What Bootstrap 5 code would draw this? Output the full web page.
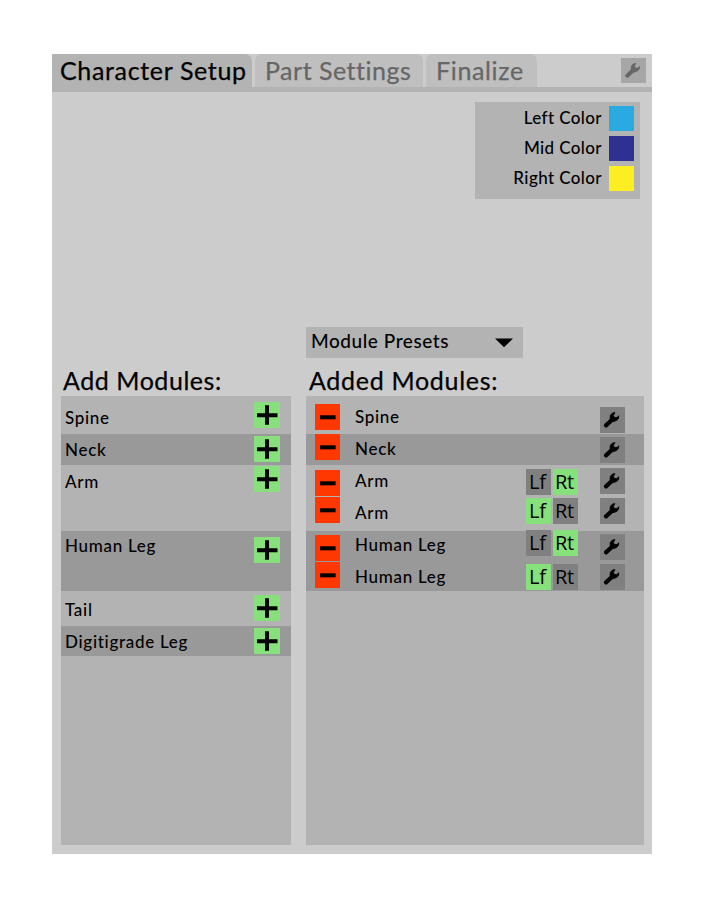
<!DOCTYPE html>
<html lang="en">
<head>
<meta charset="utf-8">
<meta name="viewport" content="width=device-width, initial-scale=1">
<title>Character Setup</title>
<link href="https://cdn.jsdelivr.net/npm/bootstrap@5.3.0/dist/css/bootstrap.min.css" rel="stylesheet">
<style>
body { background: #fff; font-family: Lato, "Liberation Sans", sans-serif; font-weight: 500; color: #000; font-size: 17px; line-height: 26px; overflow: hidden; }
.panel { width: 600px; height: 800px; margin: 54px 0 0 52px; background: #ccc; }
.tabs { height: 38px; border-bottom: 5px solid #b3b3b3; column-gap: 3px; --bs-nav-link-color: #666; }
.tabs .nav-link { height: 33px; padding: 0 0 1px; border: 0; border-radius: 7px 7px 0 0; background: #bfbfbf; color: #666; font-size: 25px; line-height: 32px; font-weight: 400; text-align: left; white-space: nowrap; letter-spacing: .5px; -webkit-text-stroke: .25px; }
.tabs .tab-character { width: 200px; padding-left: 8px; color: #000; background: #b3b3b3; border-radius: 0 7px 0 0; letter-spacing: .65px; }
.tabs .tab-part { width: 168px; padding-left: 10px; }
.tabs .tab-final { width: 111px; padding-left: 10px; letter-spacing: .65px; }
.tool { width: 25px; height: 26px; padding: 0; border: 0; border-radius: 0; background: #808080; color: #000; display: block; flex: none; }
.tool svg { display: block; width: 25px; height: 26px; }
.tool-global { height: 25px; margin: 4px 6px 0 auto; background: #a6a6a6; color: #666; }
.tool-global svg { height: 25px; }
.colors { width: 165px; height: 97px; margin: 10px 12px 1px auto; padding: 4px 6px 0 0; background: #b3b3b3; row-gap: 5px; letter-spacing: .4px; }
.colors .swatch { width: 25px; height: 25px; margin-left: 7px; }
.colors .line { height: 25px; line-height: 24px; }
.sw-left { background: #29abe2; } .sw-mid { background: #2e3192; } .sw-right { background: #fcee21; }
.presets { width: 217px; height: 31px; margin: 127px 0 0 254px; padding: 0 10px 0 5px; border: 0; border-radius: 0; background: #b3b3b3; font-size: 19px; line-height: 28px; font-weight: 500; color: #000; letter-spacing: .55px; }
.presets:hover { background: #b3b3b3; color: #000; }
.lists { margin: 11px 8px 0 9px; column-gap: 15px; }
.col-add { width: 230px; } .col-added { width: 338px; }
.title { height: 27px; margin: 0; padding-left: 2px; font-size: 25px; line-height: 22px; font-weight: 400; white-space: nowrap; letter-spacing: .55px; -webkit-text-stroke: .25px; }
.col-added .title { padding-left: 3px; letter-spacing: .7px; }
.modules { height: 449px; background: #b3b3b3; letter-spacing: .7px; }
.modules li { background: #b3b3b3; }
.modules .alt { background: #999; }
.name { margin-top: var(--t); line-height: 29px; white-space: nowrap; }
.add, .remove { width: 26px; height: 26px; padding: 0; border: 0; border-radius: 0; margin-top: var(--b); display: block; flex: none; }
.add { background: #87e07b; margin-right: 11px; }
.remove { width: 25px; background: #ff3700; margin: var(--b) 15px 0 9px; overflow: hidden; }
.add svg, .remove svg { display: block; }
.sides { column-gap: 2px; margin: var(--s) 22px 0 auto; }
.sides span { width: 25px; height: 26px; padding-right: 2px; background: #808080; font: 400 20px/26px "Open Sans", "Noto Sans", sans-serif; font-stretch: 92%; letter-spacing: -.2px; text-align: center; }
.sides .on { background: #87e07b; }
.modules .tool { margin: var(--w) 19px 0 0; }
.modules .tool.solo { margin-left: auto; }
.col-add .name { padding-left: 4px; }
.a1 { height: 38px; --t: 7px; --b: 6px; } .a2 { height: 31px; --t: 1px; --b: 2px; } .a3 { height: 66px; --t: 2px; --b: 1px; }
.a4 { height: 60px; --t: 0px; --b: 6px; } .a5 { height: 35px; --t: 4px; --b: 4px; } .a6 { height: 30px; --t: 1px; --b: 2px; }
.m1 { height: 38px; --t: 6px; --b: 8px; --w: 11px; } .m2 { height: 31px; --t: 0px; --b: 0px; --w: 3px; }
.m3 { height: 33px; --t: 1px; --b: 5px; --s: 4px; --w: 3px; } .m4 { height: 33px; --t: 0px; --b: -1px; --s: 0px; --w: 0px; }
.m5 { height: 30px; --t: -1px; --b: 4px; --s: -1px; --w: 3px; } .m6 { height: 30px; --t: 1px; --b: 1px; --s: 3px; --w: 3px; }
</style>
<script src="https://cdn.jsdelivr.net/npm/bootstrap@5.3.0/dist/js/bootstrap.bundle.min.js"></script>
</head>
<body>
<svg class="d-none" xmlns="http://www.w3.org/2000/svg">
  <symbol id="wrench" viewBox="0.9 -0.3 25 26"><path d="M6.9 18.1 13 12.4" stroke="currentColor" stroke-width="4.2" stroke-linecap="round" fill="none"/><path d="M11 10.8 11.3 8 13.2 5.9 15.8 5.3 14.2 8.2 15.5 10.4 18.2 10.1 19.6 8.4 19.4 11 17.6 13.2 14.5 14.2 12 14z" fill="currentColor" stroke="currentColor" stroke-width=".9" stroke-linejoin="round"/></symbol>
  <symbol id="plus" viewBox="0 0 26 26"><path d="M3 11.2h20.5v4H3zM11 3.2h4v19.5h-4z"/></symbol>
  <symbol id="minus" viewBox="0 0 26 26"><path d="M5 11.3h15.6v4H5z"/></symbol>
</svg>
<main class="panel d-flex flex-column">
  <nav class="tabs nav flex-nowrap align-items-start">
    <button class="nav-link tab-character">Character Setup</button>
    <button class="nav-link tab-part">Part Settings</button>
    <button class="nav-link tab-final">Finalize</button>
    <button class="tool tool-global" aria-label="Settings"><svg><use href="#wrench"/></svg></button>
  </nav>
  <section class="colors d-flex flex-column">
    <div class="line d-flex justify-content-end">Left Color<span class="swatch sw-left"></span></div>
    <div class="line d-flex justify-content-end">Mid Color<span class="swatch sw-mid"></span></div>
    <div class="line d-flex justify-content-end">Right Color<span class="swatch sw-right"></span></div>
  </section>
  <button class="presets btn d-flex justify-content-between align-items-start"><span>Module Presets</span><svg width="18" height="31"><path d="M0 11.5h18L9 20.3z"/></svg></button>
  <div class="lists d-flex">
    <section class="col-add">
      <h2 class="title">Add Modules:</h2>
      <ul class="modules list-unstyled mb-0">
        <li class="a1 d-flex align-items-start justify-content-between"><span class="name">Spine</span><button class="add"><svg width="26" height="26"><use href="#plus"/></svg></button></li>
        <li class="a2 alt d-flex align-items-start justify-content-between"><span class="name">Neck</span><button class="add"><svg width="26" height="26"><use href="#plus"/></svg></button></li>
        <li class="a3 d-flex align-items-start justify-content-between"><span class="name">Arm</span><button class="add"><svg width="26" height="26"><use href="#plus"/></svg></button></li>
        <li class="a4 alt d-flex align-items-start justify-content-between"><span class="name">Human Leg</span><button class="add"><svg width="26" height="26"><use href="#plus"/></svg></button></li>
        <li class="a5 d-flex align-items-start justify-content-between"><span class="name">Tail</span><button class="add"><svg width="26" height="26"><use href="#plus"/></svg></button></li>
        <li class="a6 alt d-flex align-items-start justify-content-between"><span class="name">Digitigrade Leg</span><button class="add"><svg width="26" height="26"><use href="#plus"/></svg></button></li>
      </ul>
    </section>
    <section class="col-added">
      <h2 class="title">Added Modules:</h2>
      <ul class="modules list-unstyled mb-0">
        <li class="m1 d-flex align-items-start"><button class="remove"><svg width="26" height="26"><use href="#minus"/></svg></button><span class="name">Spine</span><button class="tool solo"><svg><use href="#wrench"/></svg></button></li>
        <li class="m2 alt d-flex align-items-start"><button class="remove"><svg width="26" height="26"><use href="#minus"/></svg></button><span class="name">Neck</span><button class="tool solo"><svg><use href="#wrench"/></svg></button></li>
        <li class="m3 d-flex align-items-start"><button class="remove"><svg width="26" height="26"><use href="#minus"/></svg></button><span class="name">Arm</span><div class="sides d-flex"><span>Lf</span><span class="on">Rt</span></div><button class="tool"><svg><use href="#wrench"/></svg></button></li>
        <li class="m4 d-flex align-items-start"><button class="remove"><svg width="26" height="26"><use href="#minus"/></svg></button><span class="name">Arm</span><div class="sides d-flex"><span class="on">Lf</span><span>Rt</span></div><button class="tool"><svg><use href="#wrench"/></svg></button></li>
        <li class="m5 alt d-flex align-items-start"><button class="remove"><svg width="26" height="26"><use href="#minus"/></svg></button><span class="name">Human Leg</span><div class="sides d-flex"><span>Lf</span><span class="on">Rt</span></div><button class="tool"><svg><use href="#wrench"/></svg></button></li>
        <li class="m6 alt d-flex align-items-start"><button class="remove"><svg width="26" height="26"><use href="#minus"/></svg></button><span class="name">Human Leg</span><div class="sides d-flex"><span class="on">Lf</span><span>Rt</span></div><button class="tool"><svg><use href="#wrench"/></svg></button></li>
      </ul>
    </section>
  </div>
</main>
</body>
</html>
